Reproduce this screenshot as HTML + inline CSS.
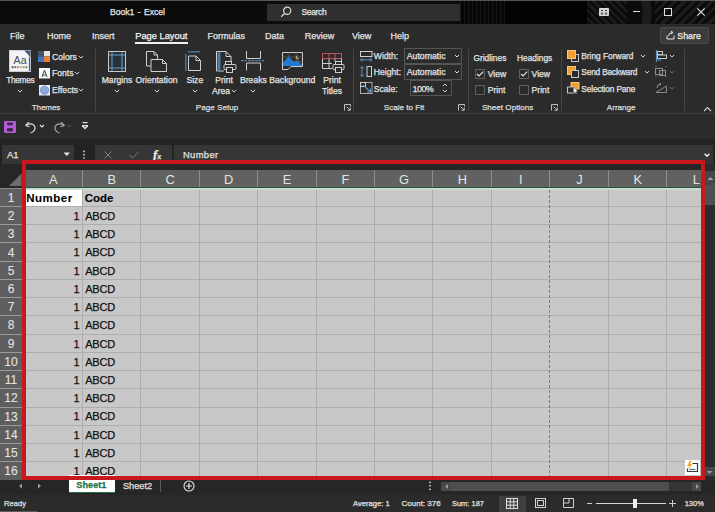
<!DOCTYPE html><html><head><meta charset="utf-8"><style>
*{margin:0;padding:0;box-sizing:border-box}
html,body{width:715px;height:512px;overflow:hidden;background:#2b2b2b;font-family:"Liberation Sans",sans-serif;color:#e6e6e6;position:relative}
.a{position:absolute}
.t{position:absolute;white-space:nowrap;line-height:1;-webkit-text-stroke:0.25px currentColor}
svg{overflow:visible}
</style></head><body>
<div class="a" style="left:0px;top:0px;width:715px;height:24px;background:#0b0b0b;"></div>
<div class="a" style="left:460px;top:1px;width:45px;height:23px;background:repeating-linear-gradient(90deg,#161616 0 1.5px,#070707 1.5px 4px);"></div>
<div class="a" style="left:505px;top:1px;width:82px;height:23px;background:#030303;"></div>
<div class="a" style="left:587px;top:1px;width:40px;height:23px;background:repeating-linear-gradient(45deg,#0b0b0b 0 3px,#1b1b1b 3px 5.5px);"></div>
<div class="a" style="left:627px;top:1px;width:88px;height:23px;background:#0b0b0b;"></div>
<div class="a" style="left:655px;top:1px;width:60px;height:23px;background:repeating-linear-gradient(-45deg,#0b0b0b 0 3.5px,#1c1c1c 3.5px 6.5px);"></div>
<svg class="a" style="left:587px;top:1px;overflow:hidden" width="128" height="23"><circle cx="8" cy="12" r="52" fill="none" stroke="#1c1c1c" stroke-width="9"/></svg>
<div class="a" style="left:0px;top:0px;width:715px;height:1px;background:#555555;"></div>
<div class="a" style="left:0px;top:24px;width:715px;height:89px;background:#2b2b2b;"></div>
<div class="a" style="left:0px;top:113px;width:715px;height:1px;background:#3c3c3c;"></div>
<div class="a" style="left:0px;top:114px;width:715px;height:25px;background:#2b2b2b;"></div>
<div class="a" style="left:0px;top:139px;width:715px;height:31px;background:#232323;"></div>
<div class="t" style="left:110.00px;top:8.00px;font-size:8.6px;color:#e6e6e6;word-spacing:1px">Book1 - Excel</div>
<div class="a" style="left:267px;top:4px;width:193px;height:17px;background:#2f2f2f;"></div>
<svg class="a" style="left:280px;top:6px" width="12" height="12" viewBox="0 0 12 12"><circle cx="7.2" cy="4.8" r="3.6" fill="none" stroke="#ddd" stroke-width="1.2"/><line x1="4.6" y1="7.4" x2="1.2" y2="10.8" stroke="#ddd" stroke-width="1.3"/></svg>
<div class="t" style="left:301.50px;top:8.00px;font-size:8.4px;color:#e6e6e6;letter-spacing:-0.3px">Search</div>
<svg class="a" style="left:598.5px;top:8px" width="10" height="8" viewBox="0 0 10 8"><rect x="0" y="0" width="10" height="8" rx="1" fill="#d8d8d8"/><path d="M2 2.5 H4 M6 2.5 H8" stroke="#333" stroke-width="1"/><path d="M3 4 V6.5 M7 4 V6.5 M2 5.5 L3 6.5 L4 5.5 M6 5.5 L7 6.5 L8 5.5" fill="none" stroke="#333" stroke-width="0.9"/></svg>
<div class="a" style="left:633px;top:11px;width:7px;height:1px;background:#ddd;"></div>
<div class="a" style="left:664px;top:8px;width:8px;height:8px;background:transparent;border:1px solid #ddd"></div>
<svg class="a" style="left:697px;top:8px" width="8" height="8" viewBox="0 0 8 8"><path d="M0.3 0.3L7.7 7.7M7.7 0.3L0.3 7.7" stroke="#ddd" stroke-width="1.1"/></svg>
<div class="t" style="left:10.00px;top:32.00px;font-size:9.0px;color:#e4e4e4;">File</div>
<div class="t" style="left:47.00px;top:32.00px;font-size:9.0px;color:#e4e4e4;">Home</div>
<div class="t" style="left:92.00px;top:32.00px;font-size:9.0px;color:#e4e4e4;">Insert</div>
<div class="t" style="left:207.40px;top:32.00px;font-size:9.0px;color:#e4e4e4;">Formulas</div>
<div class="t" style="left:265.00px;top:32.00px;font-size:9.0px;color:#e4e4e4;">Data</div>
<div class="t" style="left:304.70px;top:32.00px;font-size:9.0px;color:#e4e4e4;">Review</div>
<div class="t" style="left:352.00px;top:32.00px;font-size:9.0px;color:#e4e4e4;">View</div>
<div class="t" style="left:390.60px;top:32.00px;font-size:9.0px;color:#e4e4e4;">Help</div>
<div class="t" style="left:135.20px;top:32.00px;font-size:9.3px;color:#f4f4f4;">Page Layout</div>
<div class="a" style="left:135px;top:42px;width:53px;height:2px;background:#f0f0f0;"></div>
<div class="a" style="left:660px;top:27px;width:49px;height:17px;background:#3b3b3b;border:1px solid #4a4a4a;border-radius:2px"></div>
<svg class="a" style="left:666px;top:30px" width="9" height="10" viewBox="0 0 9 10"><path d="M1 5.5 V9 H8 V5.5" fill="none" stroke="#e8e8e8" stroke-width="1"/><path d="M2.5 6 Q3 2.5 6.5 2.5 M5 1 L7 2.5 L5 4" fill="none" stroke="#e8e8e8" stroke-width="1"/></svg>
<div class="t" style="left:677.30px;top:32.00px;font-size:8.8px;color:#f0f0f0;">Share</div>
<div class="a" style="left:94.5px;top:49px;width:1px;height:62px;background:#454545;"></div>
<div class="a" style="left:353.4px;top:49px;width:1px;height:62px;background:#454545;"></div>
<div class="a" style="left:467.5px;top:49px;width:1px;height:62px;background:#454545;"></div>
<div class="a" style="left:560.7px;top:49px;width:1px;height:62px;background:#454545;"></div>
<div class="a" style="left:683.5px;top:49px;width:1px;height:62px;background:#454545;"></div>
<div class="t" style="left:-14.00px;top:104.00px;font-size:8.1px;color:#dcdcdc;width:120.00px;text-align:center;letter-spacing:-0.15px">Themes</div>
<div class="t" style="left:157.00px;top:104.00px;font-size:8.1px;color:#dcdcdc;width:120.00px;text-align:center;">Page Setup</div>
<div class="t" style="left:344.00px;top:104.00px;font-size:8.1px;color:#dcdcdc;width:120.00px;text-align:center;">Scale to Fit</div>
<div class="t" style="left:447.60px;top:104.00px;font-size:8.1px;color:#dcdcdc;width:120.00px;text-align:center;">Sheet Options</div>
<div class="t" style="left:561.20px;top:104.00px;font-size:8.1px;color:#dcdcdc;width:120.00px;text-align:center;">Arrange</div>
<svg class="a" style="left:343.5px;top:104px" width="7" height="7" viewBox="0 0 7 7"><path d="M0.5 6.5 V0.5 H6.5 V2.5" fill="none" stroke="#bdbdbd" stroke-width="1"/><path d="M2.5 2.5 L6 6 M3.5 6.3 H6.3 V3.5" fill="none" stroke="#bdbdbd" stroke-width="1"/></svg>
<svg class="a" style="left:458px;top:104px" width="7" height="7" viewBox="0 0 7 7"><path d="M0.5 6.5 V0.5 H6.5 V2.5" fill="none" stroke="#bdbdbd" stroke-width="1"/><path d="M2.5 2.5 L6 6 M3.5 6.3 H6.3 V3.5" fill="none" stroke="#bdbdbd" stroke-width="1"/></svg>
<svg class="a" style="left:551px;top:104px" width="7" height="7" viewBox="0 0 7 7"><path d="M0.5 6.5 V0.5 H6.5 V2.5" fill="none" stroke="#bdbdbd" stroke-width="1"/><path d="M2.5 2.5 L6 6 M3.5 6.3 H6.3 V3.5" fill="none" stroke="#bdbdbd" stroke-width="1"/></svg>
<svg class="a" style="left:703px;top:106px" width="9" height="6" viewBox="0 0 9 6"><path d="M1 5 L4.5 1.5 L8 5" fill="none" stroke="#d0d0d0" stroke-width="1.1"/></svg>
<svg class="a" style="left:9px;top:50px" width="22" height="22" viewBox="0 0 22 22"><rect x="0.5" y="0.5" width="21" height="21" fill="#f3f3f7" stroke="#c9cde0"/><path d="M20.5 1 V21" stroke="#4f5a74" stroke-width="1.2"/><path d="M15 0.5 H21.5 V7 Z" fill="#4f5a74"/><path d="M15 0.5 L15.5 6 L21 7" fill="none" stroke="#fff" stroke-width="0.6"/><text x="4.6" y="14.2" font-family="Liberation Sans" font-size="10.6" fill="#4a4a4a">Aa</text><rect x="2.60" y="16.2" width="1.9" height="1.9" fill="#555"/><rect x="5.35" y="16.2" width="1.9" height="1.9" fill="#7a6a5f"/><rect x="8.10" y="16.2" width="1.9" height="1.9" fill="#b88a80"/><rect x="10.85" y="16.2" width="1.9" height="1.9" fill="#c0b070"/><rect x="13.60" y="16.2" width="1.9" height="1.9" fill="#88a868"/><rect x="16.35" y="16.2" width="1.9" height="1.9" fill="#5f9050"/></svg>
<div class="t" style="left:-39.70px;top:76.00px;font-size:8.3px;color:#e4e4e4;width:120.00px;text-align:center;letter-spacing:-0.3px">Themes</div>
<svg class="a" style="left:16px;top:87.8px" width="8" height="6" viewBox="0 0 8 6"><path d="M1.7999999999999998 1.9 L4 4.1 L6.2 1.9" fill="none" stroke="#d8d8d8" stroke-width="1"/></svg>
<svg class="a" style="left:38px;top:50.5px" width="12" height="11" viewBox="0 0 12 11"><rect x="0" y="0" width="6" height="5.5" fill="#44546a"/><rect x="0" y="5.5" width="6" height="5.5" fill="#4472c4"/><rect x="6" y="0" width="6" height="5.5" fill="#e7e6e6"/><rect x="6" y="5.5" width="6" height="5.5" fill="#ed7d31"/></svg>
<div class="t" style="left:52.00px;top:53.00px;font-size:8.6px;color:#e4e4e4;">Colors</div>
<svg class="a" style="left:76.5px;top:54px" width="8" height="6" viewBox="0 0 8 6"><path d="M1.7999999999999998 1.9 L4 4.1 L6.2 1.9" fill="none" stroke="#d8d8d8" stroke-width="1"/></svg>
<svg class="a" style="left:38.5px;top:67.8px" width="11" height="10.5" viewBox="0 0 11 10.5"><rect x="0" y="0" width="11" height="10.5" fill="#fafafa"/><path d="M3 9 L5.5 2 L8 9 M3.8 7 H7.2" fill="none" stroke="#444" stroke-width="1"/></svg>
<div class="t" style="left:52.00px;top:69.00px;font-size:8.6px;color:#e4e4e4;">Fonts</div>
<svg class="a" style="left:73px;top:70px" width="8" height="6" viewBox="0 0 8 6"><path d="M1.7999999999999998 1.9 L4 4.1 L6.2 1.9" fill="none" stroke="#d8d8d8" stroke-width="1"/></svg>
<svg class="a" style="left:38.5px;top:84.6px" width="11" height="10.5" viewBox="0 0 11 10.5"><rect x="0" y="0" width="11" height="10.5" fill="#e8ecf4"/><circle cx="5.5" cy="5.25" r="4.2" fill="#8eaadb" stroke="#5c7fbf" stroke-width="0.6"/></svg>
<div class="t" style="left:52.00px;top:86.00px;font-size:8.6px;color:#e4e4e4;">Effects</div>
<svg class="a" style="left:77px;top:87px" width="8" height="6" viewBox="0 0 8 6"><path d="M1.7999999999999998 1.9 L4 4.1 L6.2 1.9" fill="none" stroke="#d8d8d8" stroke-width="1"/></svg>
<svg class="a" style="left:108px;top:50.5px" width="18" height="21" viewBox="0 0 18 21"><rect x="0.5" y="0.5" width="17" height="20" fill="#26323c" stroke="#c8c8c8"/><path d="M4 1 V20 M14 1 V20 M1 4 H17 M1 17 H17" stroke="#6e9fc4" stroke-width="1"/></svg>
<div class="t" style="left:57.00px;top:76.00px;font-size:8.6px;color:#e4e4e4;width:120.00px;text-align:center;">Margins</div>
<svg class="a" style="left:113px;top:87.8px" width="8" height="6" viewBox="0 0 8 6"><path d="M1.7999999999999998 1.9 L4 4.1 L6.2 1.9" fill="none" stroke="#d8d8d8" stroke-width="1"/></svg>
<svg class="a" style="left:146px;top:51px" width="22" height="21" viewBox="0 0 22 21"><path d="M0.5 0.5 H8 L11.5 4 V15 H0.5 Z" fill="#2b2b2b" stroke="#cfcfcf"/><path d="M8 0.5 V4 H11.5" fill="none" stroke="#cfcfcf"/><path d="M5 8.5 H16.5 L20.5 12.5 V20.5 H5 Z" fill="#2b2b2b" stroke="#cfcfcf"/><path d="M16.5 8.5 V12.5 H20.5" fill="none" stroke="#cfcfcf"/></svg>
<div class="t" style="left:96.50px;top:76.00px;font-size:8.6px;color:#e4e4e4;width:120.00px;text-align:center;">Orientation</div>
<svg class="a" style="left:152.5px;top:87.8px" width="8" height="6" viewBox="0 0 8 6"><path d="M1.7999999999999998 1.9 L4 4.1 L6.2 1.9" fill="none" stroke="#d8d8d8" stroke-width="1"/></svg>
<svg class="a" style="left:185px;top:51px" width="17" height="21" viewBox="0 0 17 21"><path d="M0.8 3 V20" stroke="#4f7fa6" stroke-width="1.3"/><path d="M3 0.8 H15" stroke="#4f7fa6" stroke-width="1.3"/><path d="M3.5 5 H11 L15.5 9.5 V19.5 H3.5 Z" fill="none" stroke="#cfcfcf"/><path d="M11 5 V9.5 H15.5" fill="none" stroke="#cfcfcf"/></svg>
<div class="t" style="left:134.80px;top:76.00px;font-size:8.6px;color:#e4e4e4;width:120.00px;text-align:center;">Size</div>
<svg class="a" style="left:190.8px;top:87.8px" width="8" height="6" viewBox="0 0 8 6"><path d="M1.7999999999999998 1.9 L4 4.1 L6.2 1.9" fill="none" stroke="#d8d8d8" stroke-width="1"/></svg>
<svg class="a" style="left:216px;top:51px" width="21" height="22" viewBox="0 0 21 22"><path d="M0.5 0.5 H10 L15 5.5 V10" fill="none" stroke="#cfcfcf"/><path d="M10 0.5 V5.5 H15" fill="none" stroke="#cfcfcf"/><path d="M0.5 0.5 V20 H8" fill="none" stroke="#cfcfcf"/><rect x="1.5" y="1.5" width="3" height="18" fill="#4f7fa6"/><rect x="9.5" y="10.5" width="6" height="3" fill="#2b2b2b" stroke="#cfcfcf"/><rect x="8" y="13.5" width="12" height="5" rx="1" fill="#2b2b2b" stroke="#cfcfcf"/><rect x="10.5" y="16.5" width="6" height="5" fill="#2b2b2b" stroke="#cfcfcf"/></svg>
<div class="t" style="left:164.00px;top:76.00px;font-size:8.6px;color:#e4e4e4;width:120.00px;text-align:center;">Print</div>
<div class="t" style="left:212.00px;top:87.00px;font-size:8.6px;color:#e4e4e4;">Area</div>
<svg class="a" style="left:229.5px;top:87.8px" width="8" height="6" viewBox="0 0 8 6"><path d="M1.7999999999999998 1.9 L4 4.1 L6.2 1.9" fill="none" stroke="#d8d8d8" stroke-width="1"/></svg>
<svg class="a" style="left:241px;top:51px" width="23" height="20" viewBox="0 0 23 20"><path d="M5.5 0 V7.5 H19.5 V0" fill="none" stroke="#cfcfcf"/><path d="M5.5 19.5 V12 H19.5 V19.5" fill="none" stroke="#cfcfcf"/><path d="M0 9.6 H23" stroke="#4f86b5" stroke-width="1.2" stroke-dasharray="2.5 1"/></svg>
<div class="t" style="left:193.40px;top:76.00px;font-size:8.6px;color:#e4e4e4;width:120.00px;text-align:center;">Breaks</div>
<svg class="a" style="left:249.4px;top:87.8px" width="8" height="6" viewBox="0 0 8 6"><path d="M1.7999999999999998 1.9 L4 4.1 L6.2 1.9" fill="none" stroke="#d8d8d8" stroke-width="1"/></svg>
<svg class="a" style="left:282px;top:52px" width="21" height="18" viewBox="0 0 21 18"><path d="M0.5 0.5 H20.5 V14.5 H9 L6 17.5 H0.5 Z" fill="#2b2b2b" stroke="#cfcfcf"/><path d="M7 0.5 V14 M14 0.5 V14 M0.5 5 H20.5 M0.5 9.5 H20.5" stroke="#5a5a5a" stroke-width="0.9"/><path d="M1 14 V11 L6.5 4.5 L12.5 10.5 L15 8.5 L20 12.8 V14 Z" fill="#1f7ad6"/><path d="M16 3.5 A2 2 0 1 0 17.8 6.5 A1.6 1.6 0 0 1 16 3.5 Z" fill="#e8c878"/></svg>
<div class="t" style="left:232.30px;top:76.00px;font-size:8.6px;color:#e4e4e4;width:120.00px;text-align:center;">Background</div>
<svg class="a" style="left:321.5px;top:52.5px" width="23" height="20" viewBox="0 0 23 20"><path d="M0.5 5.5 V15.5 H10 M0.5 10.5 H10 M7 5.5 V15.5 M13 5.5 V8" fill="none" stroke="#cfcfcf" stroke-width="1"/><path d="M0.5 5.5 V0.5 H19.5 V5.5 M0.5 5.5 H19.5 M7 0.5 V5.5 M13 0.5 V5.5" fill="none" stroke="#c25555" stroke-width="1"/><path d="M19.5 5.5 V8" stroke="#cfcfcf"/><rect x="13.5" y="8.5" width="6" height="3" fill="#2b2b2b" stroke="#cfcfcf"/><rect x="11" y="11.5" width="11" height="5" rx="1" fill="#2b2b2b" stroke="#cfcfcf"/><rect x="13.5" y="14.5" width="6" height="5" fill="#2b2b2b" stroke="#cfcfcf"/></svg>
<div class="t" style="left:272.00px;top:76.00px;font-size:8.6px;color:#e4e4e4;width:120.00px;text-align:center;">Print</div>
<div class="t" style="left:272.00px;top:87.00px;font-size:8.6px;color:#e4e4e4;width:120.00px;text-align:center;">Titles</div>
<svg class="a" style="left:359.5px;top:50.5px" width="13" height="10" viewBox="0 0 13 10"><rect x="0.5" y="0.5" width="11.5" height="5" fill="none" stroke="#cfcfcf"/><path d="M0.5 8.8 H12 M2.5 7 L0.5 8.8 L2.5 10.6 M10 7 L12 8.8 L10 10.6" fill="none" stroke="#5a94c4" stroke-width="1"/></svg>
<div class="t" style="left:373.80px;top:52.00px;font-size:8.6px;color:#e4e4e4;">Width:</div>
<svg class="a" style="left:359.5px;top:66px" width="13" height="11" viewBox="0 0 13 11"><rect x="7" y="0.5" width="4.5" height="10" fill="none" stroke="#cfcfcf"/><path d="M2 0.5 V10.5 M0.2 2.5 L2 0.5 L3.8 2.5 M0.2 8.5 L2 10.5 L3.8 8.5" fill="none" stroke="#5a94c4" stroke-width="1"/></svg>
<div class="t" style="left:373.80px;top:68.00px;font-size:8.6px;color:#e4e4e4;">Height:</div>
<svg class="a" style="left:359.5px;top:82px" width="13" height="12" viewBox="0 0 13 12"><rect x="0.5" y="0.5" width="11.5" height="11" fill="none" stroke="#b7a8a0"/><rect x="0.5" y="0.5" width="5" height="4" fill="none" stroke="#cfcfcf"/><path d="M3 3 L10.5 10 M7 10 H10.5 V6.5" fill="none" stroke="#5a94c4" stroke-width="1.1"/></svg>
<div class="t" style="left:373.80px;top:85.00px;font-size:8.6px;color:#e4e4e4;">Scale:</div>
<div class="a" style="left:404px;top:47.5px;width:57.6px;height:16px;background:#2b2b2b;border:1px solid #555"></div>
<div class="t" style="left:406.70px;top:52.00px;font-size:8.75px;color:#e6e6e6;">Automatic</div>
<svg class="a" style="left:452.5px;top:52.8px" width="8" height="6" viewBox="0 0 8 6"><path d="M2 2.0 L4 4.0 L6 2.0" fill="none" stroke="#e0e0e0" stroke-width="1"/></svg>
<div class="a" style="left:404px;top:63.5px;width:57.6px;height:16px;background:#2b2b2b;border:1px solid #555"></div>
<div class="t" style="left:406.70px;top:68.00px;font-size:8.75px;color:#e6e6e6;">Automatic</div>
<svg class="a" style="left:452.5px;top:68.8px" width="8" height="6" viewBox="0 0 8 6"><path d="M2 2.0 L4 4.0 L6 2.0" fill="none" stroke="#e0e0e0" stroke-width="1"/></svg>
<div class="a" style="left:410px;top:80.3px;width:41.5px;height:16px;background:#2b2b2b;border:1px solid #555"></div>
<div class="t" style="left:412.60px;top:85.00px;font-size:9.0px;color:#e6e6e6;letter-spacing:-0.6px">100%</div>
<svg class="a" style="left:442px;top:82px" width="6" height="12" viewBox="0 0 6 12"><path d="M1 4 L3 2 L5 4 M1 8 L3 10 L5 8" fill="none" stroke="#d0d0d0" stroke-width="1"/></svg>
<div class="t" style="left:473.40px;top:54.00px;font-size:8.35px;color:#e4e4e4;">Gridlines</div>
<div class="t" style="left:517.00px;top:54.00px;font-size:8.35px;color:#e4e4e4;">Headings</div>
<svg class="a" style="left:475.2px;top:68.5px" width="10" height="10" viewBox="0 0 10 10"><rect x="0.5" y="0.5" width="9" height="9" fill="none" stroke="#5f5f5f"/><path d="M2 5 L4 7 L8.2 2.6" fill="none" stroke="#e8e8e8" stroke-width="1.1"/></svg>
<div class="t" style="left:487.70px;top:70.00px;font-size:8.6px;color:#e4e4e4;">View</div>
<svg class="a" style="left:475.2px;top:84.5px" width="10" height="10" viewBox="0 0 10 10"><rect x="0.5" y="0.5" width="9" height="9" fill="none" stroke="#5f5f5f"/></svg>
<div class="t" style="left:487.70px;top:86.00px;font-size:8.6px;color:#e4e4e4;">Print</div>
<svg class="a" style="left:519px;top:68.5px" width="10" height="10" viewBox="0 0 10 10"><rect x="0.5" y="0.5" width="9" height="9" fill="none" stroke="#5f5f5f"/><path d="M2 5 L4 7 L8.2 2.6" fill="none" stroke="#e8e8e8" stroke-width="1.1"/></svg>
<div class="t" style="left:531.60px;top:70.00px;font-size:8.6px;color:#e4e4e4;">View</div>
<svg class="a" style="left:519px;top:84.5px" width="10" height="10" viewBox="0 0 10 10"><rect x="0.5" y="0.5" width="9" height="9" fill="none" stroke="#5f5f5f"/></svg>
<div class="t" style="left:531.60px;top:86.00px;font-size:8.6px;color:#e4e4e4;">Print</div>
<svg class="a" style="left:567px;top:49.5px" width="13" height="12" viewBox="0 0 13 12"><rect x="4.5" y="4.5" width="7" height="7" fill="none" stroke="#c8c8c8"/><rect x="0.5" y="0.5" width="8" height="8" fill="#f0a030" stroke="#f7c57a"/></svg>
<div class="t" style="left:581.30px;top:52.00px;font-size:8.3px;color:#e4e4e4;">Bring Forward</div>
<svg class="a" style="left:638.5px;top:52.5px" width="8" height="6" viewBox="0 0 8 6"><path d="M1.7999999999999998 1.9 L4 4.1 L6.2 1.9" fill="none" stroke="#d8d8d8" stroke-width="1"/></svg>
<svg class="a" style="left:567px;top:65.5px" width="13" height="12" viewBox="0 0 13 12"><rect x="0.5" y="0.5" width="8" height="8" fill="#f0a030" stroke="#f7c57a"/><rect x="4.5" y="4.5" width="7" height="7" fill="#2b2b2b" stroke="#c8c8c8"/></svg>
<div class="t" style="left:581.30px;top:68.00px;font-size:8.3px;color:#e4e4e4;letter-spacing:-0.16px">Send Backward</div>
<svg class="a" style="left:642.6px;top:68.6px" width="8" height="6" viewBox="0 0 8 6"><path d="M1.7999999999999998 1.9 L4 4.1 L6.2 1.9" fill="none" stroke="#d8d8d8" stroke-width="1"/></svg>
<svg class="a" style="left:567px;top:82px" width="13" height="12" viewBox="0 0 13 12"><rect x="4" y="0.5" width="8" height="6.5" fill="#f0a030" stroke="#f7c57a"/><rect x="0.5" y="5" width="6.5" height="6" fill="#2b2b2b" stroke="#c8c8c8"/><path d="M6.5 5 L11 9.5 L9 9.8 L10 12 L8.8 12 L7.9 10 L6.5 11.5 Z" fill="#eee" stroke="#333" stroke-width="0.4"/></svg>
<div class="t" style="left:581.30px;top:85.00px;font-size:8.3px;color:#e4e4e4;letter-spacing:-0.13px">Selection Pane</div>
<svg class="a" style="left:655px;top:49.5px" width="12" height="12" viewBox="0 0 12 12"><path d="M1.5 0 V12" stroke="#5a94c4" stroke-width="1.2"/><rect x="2.5" y="1.5" width="5" height="3" fill="none" stroke="#c8c8c8"/><rect x="2.5" y="5" width="9" height="3.5" fill="none" stroke="#c8c8c8"/><path d="M2.5 10 H6" stroke="#5a94c4"/></svg>
<svg class="a" style="left:668.2px;top:52.5px" width="8" height="6" viewBox="0 0 8 6"><path d="M1.7999999999999998 1.9 L4 4.1 L6.2 1.9" fill="none" stroke="#d8d8d8" stroke-width="1"/></svg>
<svg class="a" style="left:655px;top:66px" width="12" height="11" viewBox="0 0 12 11"><rect x="0.5" y="2.5" width="7" height="6" fill="none" stroke="#8a8a8a"/><rect x="4.5" y="4.5" width="6" height="5" fill="none" stroke="#8a8a8a"/><path d="M0.5 0.5 H1.5 M10.5 0.5 H11.5 M0.5 10.5 H1.5 M10.5 10.5 H11.5" stroke="#8a8a8a"/></svg>
<svg class="a" style="left:668.2px;top:68.6px" width="8" height="6" viewBox="0 0 8 6"><path d="M1.7999999999999998 1.9 L4 4.1 L6.2 1.9" fill="none" stroke="#6a6a6a" stroke-width="1"/></svg>
<svg class="a" style="left:655px;top:82.5px" width="12" height="10" viewBox="0 0 12 10"><path d="M1 9.5 H11.5 V3 Z" fill="none" stroke="#8a8a8a"/><path d="M2 5 Q2 1 6 1 M4.5 0 L6 1 L4.5 2.5" fill="none" stroke="#8a8a8a"/></svg>
<svg class="a" style="left:668.2px;top:85px" width="8" height="6" viewBox="0 0 8 6"><path d="M1.7999999999999998 1.9 L4 4.1 L6.2 1.9" fill="none" stroke="#6a6a6a" stroke-width="1"/></svg>
<svg class="a" style="left:4px;top:121px" width="12" height="12" viewBox="0 0 12 12"><path d="M0 1.2 Q0 0 1.2 0 H10.8 Q12 0 12 1.2 V10.8 Q12 12 10.8 12 H1.2 Q0 12 0 10.8 Z" fill="#b25dd6"/><rect x="3.2" y="1.6" width="5.6" height="2.6" fill="#3a2440"/><rect x="3.2" y="7.2" width="5.6" height="3.2" fill="#3a2440"/></svg>
<svg class="a" style="left:24px;top:119px" width="14" height="15" viewBox="0 0 14 15"><path d="M1.5 6.5 L5 3.2 M1.5 6.5 L5.6 7.8" fill="none" stroke="#dcdcdc" stroke-width="1.2"/><path d="M1.8 6.4 Q6 4 9 5.5 Q12 7.5 10.5 11 Q9.5 13.2 6.5 14" fill="none" stroke="#dcdcdc" stroke-width="1.2"/></svg>
<svg class="a" style="left:38px;top:123.3px" width="8" height="6" viewBox="0 0 8 6"><path d="M2 2.0 L4 4.0 L6 2.0" fill="none" stroke="#dcdcdc" stroke-width="1.1"/></svg>
<svg class="a" style="left:51.5px;top:119px" width="14" height="15" viewBox="0 0 14 15"><path d="M12.5 6.5 L9 3.2 M12.5 6.5 L8.4 7.8" fill="none" stroke="#a8a8a8" stroke-width="1.2"/><path d="M12.2 6.4 Q8 4 5 5.5 Q2 7.5 3.5 11 Q4.5 13.2 7.5 14" fill="none" stroke="#a8a8a8" stroke-width="1.2"/></svg>
<svg class="a" style="left:65px;top:123px" width="8" height="6" viewBox="0 0 8 6"><path d="M2.4 2.2 L4 3.8 L5.6 2.2" fill="none" stroke="#6a6a6a" stroke-width="1"/></svg>
<svg class="a" style="left:81.5px;top:122px" width="6" height="8" viewBox="0 0 6 8"><rect x="0.5" y="0" width="5" height="1.2" fill="#e0e0e0"/><path d="M0 3 H6 V4.5 L3 7.5 L0 4.5 Z" fill="#e0e0e0"/><path d="M1.8 4 L3 5.2 L4.2 4" fill="none" stroke="#2b2b2b" stroke-width="0.8"/></svg>
<div class="a" style="left:2px;top:145px;width:72px;height:19px;background:#363636;"></div>
<div class="t" style="left:7.00px;top:150.00px;font-size:9.5px;color:#e4e4e4;">A1</div>
<svg class="a" style="left:62.5px;top:151.5px" width="8" height="5" viewBox="0 0 8 5"><path d="M0.5 0.5 H7 L3.75 4 Z" fill="#e0e0e0"/></svg>
<svg class="a" style="left:83px;top:150px" width="2" height="10" viewBox="0 0 2 10"><circle cx="1" cy="1.4" r="0.85" fill="#e0e0e0"/><circle cx="1" cy="4.7" r="0.85" fill="#e0e0e0"/><circle cx="1" cy="8" r="0.85" fill="#e0e0e0"/></svg>
<div class="a" style="left:94.5px;top:145px;width:77px;height:19px;background:#363636;"></div>
<svg class="a" style="left:104px;top:151px" width="8" height="8" viewBox="0 0 8 8"><path d="M0.5 0.5 L7.5 7.5 M7.5 0.5 L0.5 7.5" stroke="#7c7c7c" stroke-width="1"/></svg>
<svg class="a" style="left:129px;top:150.5px" width="10" height="8" viewBox="0 0 10 8"><path d="M0.5 4 L3.5 7 L9.5 0.8" fill="none" stroke="#7c7c7c" stroke-width="1"/></svg>
<div class="t" style="left:153.00px;top:148.00px;font-size:13px;color:#ececec;font-weight:bold;font-family:'Liberation Serif',serif"><i>f</i><span style="font-size:8px"><i>x</i></span></div>
<div class="a" style="left:174px;top:145px;width:539px;height:19px;background:#363636;"></div>
<div class="t" style="left:183.00px;top:151.00px;font-size:9.3px;color:#e4e4e4;letter-spacing:0.4px">Number</div>
<svg class="a" style="left:703px;top:151.5px" width="8" height="6" viewBox="0 0 8 6"><path d="M1.6 1.8 L4 4.2 L6.4 1.8" fill="none" stroke="#f0f0f0" stroke-width="1.4"/></svg>
<div class="a" style="left:0px;top:164px;width:715px;height:316px;background:#262626;"></div>
<svg class="a" style="left:0px;top:170px" width="22" height="18" viewBox="0 0 22 18"><path d="M21.5 3.5 L21.5 16 L9 16 Z" fill="#6e6e6e"/></svg>
<div class="a" style="left:22px;top:170px;width:683px;height:17px;background:#5f6260;"></div>
<div class="t" style="left:-6.73px;top:174.00px;font-size:12.8px;color:#e4e4e4;width:120.00px;text-align:center;-webkit-text-stroke:0">A</div>
<div class="a" style="left:81.70px;top:170px;width:1px;height:17px;background:#8e9090;"></div>
<div class="t" style="left:51.73px;top:174.00px;font-size:12.8px;color:#e4e4e4;width:120.00px;text-align:center;-webkit-text-stroke:0">B</div>
<div class="a" style="left:140.15px;top:170px;width:1px;height:17px;background:#8e9090;"></div>
<div class="t" style="left:110.18px;top:174.00px;font-size:12.8px;color:#e4e4e4;width:120.00px;text-align:center;-webkit-text-stroke:0">C</div>
<div class="a" style="left:198.60px;top:170px;width:1px;height:17px;background:#8e9090;"></div>
<div class="t" style="left:168.63px;top:174.00px;font-size:12.8px;color:#e4e4e4;width:120.00px;text-align:center;-webkit-text-stroke:0">D</div>
<div class="a" style="left:257.05px;top:170px;width:1px;height:17px;background:#8e9090;"></div>
<div class="t" style="left:227.08px;top:174.00px;font-size:12.8px;color:#e4e4e4;width:120.00px;text-align:center;-webkit-text-stroke:0">E</div>
<div class="a" style="left:315.50px;top:170px;width:1px;height:17px;background:#8e9090;"></div>
<div class="t" style="left:285.53px;top:174.00px;font-size:12.8px;color:#e4e4e4;width:120.00px;text-align:center;-webkit-text-stroke:0">F</div>
<div class="a" style="left:373.95px;top:170px;width:1px;height:17px;background:#8e9090;"></div>
<div class="t" style="left:343.98px;top:174.00px;font-size:12.8px;color:#e4e4e4;width:120.00px;text-align:center;-webkit-text-stroke:0">G</div>
<div class="a" style="left:432.40px;top:170px;width:1px;height:17px;background:#8e9090;"></div>
<div class="t" style="left:402.43px;top:174.00px;font-size:12.8px;color:#e4e4e4;width:120.00px;text-align:center;-webkit-text-stroke:0">H</div>
<div class="a" style="left:490.85px;top:170px;width:1px;height:17px;background:#8e9090;"></div>
<div class="t" style="left:460.88px;top:174.00px;font-size:12.8px;color:#e4e4e4;width:120.00px;text-align:center;-webkit-text-stroke:0">I</div>
<div class="a" style="left:549.30px;top:170px;width:1px;height:17px;background:#8e9090;"></div>
<div class="t" style="left:519.33px;top:174.00px;font-size:12.8px;color:#e4e4e4;width:120.00px;text-align:center;-webkit-text-stroke:0">J</div>
<div class="a" style="left:607.75px;top:170px;width:1px;height:17px;background:#8e9090;"></div>
<div class="t" style="left:577.77px;top:174.00px;font-size:12.8px;color:#e4e4e4;width:120.00px;text-align:center;-webkit-text-stroke:0">K</div>
<div class="a" style="left:666.20px;top:170px;width:1px;height:17px;background:#8e9090;"></div>
<div class="t" style="left:636.23px;top:174.00px;font-size:12.8px;color:#e4e4e4;width:120.00px;text-align:center;-webkit-text-stroke:0">L</div>
<div class="a" style="left:22px;top:186.6px;width:683px;height:1.4px;background:#30503f;"></div>
<div class="a" style="left:22px;top:188px;width:683px;height:2px;background:#c4e0cf;"></div>
<div class="a" style="left:0px;top:188px;width:22px;height:292px;background:#5e5e5e;"></div>
<div class="a" style="left:0px;top:188px;width:22px;height:1px;background:#8a8a8a;"></div>
<div class="a" style="left:22px;top:190px;width:683px;height:290px;background:#c8c8c8;"></div>
<div class="t" style="left:-49.00px;top:192.00px;font-size:12px;color:#e4e4e4;width:120.00px;text-align:center;-webkit-text-stroke:0.1px #e4e4e4">1</div>
<div class="a" style="left:0px;top:205.94px;width:22px;height:1px;background:#9a9a9a;"></div>
<div class="a" style="left:22px;top:205.94px;width:683px;height:1px;background:#aeaeae;"></div>
<div class="t" style="left:-49.00px;top:210.00px;font-size:12px;color:#e4e4e4;width:120.00px;text-align:center;-webkit-text-stroke:0.1px #e4e4e4">2</div>
<div class="a" style="left:0px;top:224.18px;width:22px;height:1px;background:#9a9a9a;"></div>
<div class="a" style="left:22px;top:224.18px;width:683px;height:1px;background:#aeaeae;"></div>
<div class="t" style="left:-49.00px;top:228.00px;font-size:12px;color:#e4e4e4;width:120.00px;text-align:center;-webkit-text-stroke:0.1px #e4e4e4">3</div>
<div class="a" style="left:0px;top:242.42px;width:22px;height:1px;background:#9a9a9a;"></div>
<div class="a" style="left:22px;top:242.42px;width:683px;height:1px;background:#aeaeae;"></div>
<div class="t" style="left:-49.00px;top:247.00px;font-size:12px;color:#e4e4e4;width:120.00px;text-align:center;-webkit-text-stroke:0.1px #e4e4e4">4</div>
<div class="a" style="left:0px;top:260.66px;width:22px;height:1px;background:#9a9a9a;"></div>
<div class="a" style="left:22px;top:260.66px;width:683px;height:1px;background:#aeaeae;"></div>
<div class="t" style="left:-49.00px;top:265.00px;font-size:12px;color:#e4e4e4;width:120.00px;text-align:center;-webkit-text-stroke:0.1px #e4e4e4">5</div>
<div class="a" style="left:0px;top:278.90px;width:22px;height:1px;background:#9a9a9a;"></div>
<div class="a" style="left:22px;top:278.90px;width:683px;height:1px;background:#aeaeae;"></div>
<div class="t" style="left:-49.00px;top:283.00px;font-size:12px;color:#e4e4e4;width:120.00px;text-align:center;-webkit-text-stroke:0.1px #e4e4e4">6</div>
<div class="a" style="left:0px;top:297.14px;width:22px;height:1px;background:#9a9a9a;"></div>
<div class="a" style="left:22px;top:297.14px;width:683px;height:1px;background:#aeaeae;"></div>
<div class="t" style="left:-49.00px;top:301.00px;font-size:12px;color:#e4e4e4;width:120.00px;text-align:center;-webkit-text-stroke:0.1px #e4e4e4">7</div>
<div class="a" style="left:0px;top:315.38px;width:22px;height:1px;background:#9a9a9a;"></div>
<div class="a" style="left:22px;top:315.38px;width:683px;height:1px;background:#aeaeae;"></div>
<div class="t" style="left:-49.00px;top:319.00px;font-size:12px;color:#e4e4e4;width:120.00px;text-align:center;-webkit-text-stroke:0.1px #e4e4e4">8</div>
<div class="a" style="left:0px;top:333.62px;width:22px;height:1px;background:#9a9a9a;"></div>
<div class="a" style="left:22px;top:333.62px;width:683px;height:1px;background:#aeaeae;"></div>
<div class="t" style="left:-49.00px;top:338.00px;font-size:12px;color:#e4e4e4;width:120.00px;text-align:center;-webkit-text-stroke:0.1px #e4e4e4">9</div>
<div class="a" style="left:0px;top:351.86px;width:22px;height:1px;background:#9a9a9a;"></div>
<div class="a" style="left:22px;top:351.86px;width:683px;height:1px;background:#aeaeae;"></div>
<div class="t" style="left:-49.00px;top:356.00px;font-size:12px;color:#e4e4e4;width:120.00px;text-align:center;-webkit-text-stroke:0.1px #e4e4e4">10</div>
<div class="a" style="left:0px;top:370.10px;width:22px;height:1px;background:#9a9a9a;"></div>
<div class="a" style="left:22px;top:370.10px;width:683px;height:1px;background:#aeaeae;"></div>
<div class="t" style="left:-49.00px;top:374.00px;font-size:12px;color:#e4e4e4;width:120.00px;text-align:center;-webkit-text-stroke:0.1px #e4e4e4">11</div>
<div class="a" style="left:0px;top:388.34px;width:22px;height:1px;background:#9a9a9a;"></div>
<div class="a" style="left:22px;top:388.34px;width:683px;height:1px;background:#aeaeae;"></div>
<div class="t" style="left:-49.00px;top:392.00px;font-size:12px;color:#e4e4e4;width:120.00px;text-align:center;-webkit-text-stroke:0.1px #e4e4e4">12</div>
<div class="a" style="left:0px;top:406.58px;width:22px;height:1px;background:#9a9a9a;"></div>
<div class="a" style="left:22px;top:406.58px;width:683px;height:1px;background:#aeaeae;"></div>
<div class="t" style="left:-49.00px;top:411.00px;font-size:12px;color:#e4e4e4;width:120.00px;text-align:center;-webkit-text-stroke:0.1px #e4e4e4">13</div>
<div class="a" style="left:0px;top:424.82px;width:22px;height:1px;background:#9a9a9a;"></div>
<div class="a" style="left:22px;top:424.82px;width:683px;height:1px;background:#aeaeae;"></div>
<div class="t" style="left:-49.00px;top:429.00px;font-size:12px;color:#e4e4e4;width:120.00px;text-align:center;-webkit-text-stroke:0.1px #e4e4e4">14</div>
<div class="a" style="left:0px;top:443.06px;width:22px;height:1px;background:#9a9a9a;"></div>
<div class="a" style="left:22px;top:443.06px;width:683px;height:1px;background:#aeaeae;"></div>
<div class="t" style="left:-49.00px;top:447.00px;font-size:12px;color:#e4e4e4;width:120.00px;text-align:center;-webkit-text-stroke:0.1px #e4e4e4">15</div>
<div class="a" style="left:0px;top:461.30px;width:22px;height:1px;background:#9a9a9a;"></div>
<div class="a" style="left:22px;top:461.30px;width:683px;height:1px;background:#aeaeae;"></div>
<div class="t" style="left:-49.00px;top:465.00px;font-size:12px;color:#e4e4e4;width:120.00px;text-align:center;-webkit-text-stroke:0.1px #e4e4e4">16</div>
<div class="a" style="left:81.70px;top:190px;width:1px;height:290px;background:#aeaeae;"></div>
<div class="a" style="left:140.15px;top:190px;width:1px;height:290px;background:#aeaeae;"></div>
<div class="a" style="left:198.60px;top:190px;width:1px;height:290px;background:#aeaeae;"></div>
<div class="a" style="left:257.05px;top:190px;width:1px;height:290px;background:#aeaeae;"></div>
<div class="a" style="left:315.50px;top:190px;width:1px;height:290px;background:#aeaeae;"></div>
<div class="a" style="left:373.95px;top:190px;width:1px;height:290px;background:#aeaeae;"></div>
<div class="a" style="left:432.40px;top:190px;width:1px;height:290px;background:#aeaeae;"></div>
<div class="a" style="left:490.85px;top:190px;width:1px;height:290px;background:#aeaeae;"></div>
<div class="a" style="left:549.30px;top:190px;width:1px;height:290px;background:repeating-linear-gradient(#7a7a7a 0 3px,transparent 3px 5px);"></div>
<div class="a" style="left:607.75px;top:190px;width:1px;height:290px;background:#aeaeae;"></div>
<div class="a" style="left:666.20px;top:190px;width:1px;height:290px;background:#aeaeae;"></div>
<div class="a" style="left:23.75px;top:190px;width:57.95px;height:15.94px;background:#ffffff;"></div>
<div class="t" style="left:26.25px;top:193.00px;font-size:11.5px;color:#000;font-weight:bold;letter-spacing:0.5px;-webkit-text-stroke:0.1px #000">Number</div>
<div class="t" style="left:84.70px;top:193.00px;font-size:11.5px;color:#000;font-weight:bold;-webkit-text-stroke:0.1px #000">Code</div>
<div class="t" style="left:23.75px;top:211.00px;font-size:11px;color:#111;width:55.95px;text-align:right;-webkit-text-stroke:0.25px #111">1</div>
<div class="t" style="left:85.20px;top:211.00px;font-size:11px;color:#111;letter-spacing:-0.2px;-webkit-text-stroke:0.25px #111">ABCD</div>
<div class="t" style="left:23.75px;top:229.00px;font-size:11px;color:#111;width:55.95px;text-align:right;-webkit-text-stroke:0.25px #111">1</div>
<div class="t" style="left:85.20px;top:229.00px;font-size:11px;color:#111;letter-spacing:-0.2px;-webkit-text-stroke:0.25px #111">ABCD</div>
<div class="t" style="left:23.75px;top:247.00px;font-size:11px;color:#111;width:55.95px;text-align:right;-webkit-text-stroke:0.25px #111">1</div>
<div class="t" style="left:85.20px;top:247.00px;font-size:11px;color:#111;letter-spacing:-0.2px;-webkit-text-stroke:0.25px #111">ABCD</div>
<div class="t" style="left:23.75px;top:266.00px;font-size:11px;color:#111;width:55.95px;text-align:right;-webkit-text-stroke:0.25px #111">1</div>
<div class="t" style="left:85.20px;top:266.00px;font-size:11px;color:#111;letter-spacing:-0.2px;-webkit-text-stroke:0.25px #111">ABCD</div>
<div class="t" style="left:23.75px;top:284.00px;font-size:11px;color:#111;width:55.95px;text-align:right;-webkit-text-stroke:0.25px #111">1</div>
<div class="t" style="left:85.20px;top:284.00px;font-size:11px;color:#111;letter-spacing:-0.2px;-webkit-text-stroke:0.25px #111">ABCD</div>
<div class="t" style="left:23.75px;top:302.00px;font-size:11px;color:#111;width:55.95px;text-align:right;-webkit-text-stroke:0.25px #111">1</div>
<div class="t" style="left:85.20px;top:302.00px;font-size:11px;color:#111;letter-spacing:-0.2px;-webkit-text-stroke:0.25px #111">ABCD</div>
<div class="t" style="left:23.75px;top:320.00px;font-size:11px;color:#111;width:55.95px;text-align:right;-webkit-text-stroke:0.25px #111">1</div>
<div class="t" style="left:85.20px;top:320.00px;font-size:11px;color:#111;letter-spacing:-0.2px;-webkit-text-stroke:0.25px #111">ABCD</div>
<div class="t" style="left:23.75px;top:339.00px;font-size:11px;color:#111;width:55.95px;text-align:right;-webkit-text-stroke:0.25px #111">1</div>
<div class="t" style="left:85.20px;top:339.00px;font-size:11px;color:#111;letter-spacing:-0.2px;-webkit-text-stroke:0.25px #111">ABCD</div>
<div class="t" style="left:23.75px;top:357.00px;font-size:11px;color:#111;width:55.95px;text-align:right;-webkit-text-stroke:0.25px #111">1</div>
<div class="t" style="left:85.20px;top:357.00px;font-size:11px;color:#111;letter-spacing:-0.2px;-webkit-text-stroke:0.25px #111">ABCD</div>
<div class="t" style="left:23.75px;top:375.00px;font-size:11px;color:#111;width:55.95px;text-align:right;-webkit-text-stroke:0.25px #111">1</div>
<div class="t" style="left:85.20px;top:375.00px;font-size:11px;color:#111;letter-spacing:-0.2px;-webkit-text-stroke:0.25px #111">ABCD</div>
<div class="t" style="left:23.75px;top:393.00px;font-size:11px;color:#111;width:55.95px;text-align:right;-webkit-text-stroke:0.25px #111">1</div>
<div class="t" style="left:85.20px;top:393.00px;font-size:11px;color:#111;letter-spacing:-0.2px;-webkit-text-stroke:0.25px #111">ABCD</div>
<div class="t" style="left:23.75px;top:411.00px;font-size:11px;color:#111;width:55.95px;text-align:right;-webkit-text-stroke:0.25px #111">1</div>
<div class="t" style="left:85.20px;top:411.00px;font-size:11px;color:#111;letter-spacing:-0.2px;-webkit-text-stroke:0.25px #111">ABCD</div>
<div class="t" style="left:23.75px;top:430.00px;font-size:11px;color:#111;width:55.95px;text-align:right;-webkit-text-stroke:0.25px #111">1</div>
<div class="t" style="left:85.20px;top:430.00px;font-size:11px;color:#111;letter-spacing:-0.2px;-webkit-text-stroke:0.25px #111">ABCD</div>
<div class="t" style="left:23.75px;top:448.00px;font-size:11px;color:#111;width:55.95px;text-align:right;-webkit-text-stroke:0.25px #111">1</div>
<div class="t" style="left:85.20px;top:448.00px;font-size:11px;color:#111;letter-spacing:-0.2px;-webkit-text-stroke:0.25px #111">ABCD</div>
<div class="t" style="left:23.75px;top:466.00px;font-size:11px;color:#111;width:55.95px;text-align:right;-webkit-text-stroke:0.25px #111">1</div>
<div class="t" style="left:85.20px;top:466.00px;font-size:11px;color:#111;letter-spacing:-0.2px;-webkit-text-stroke:0.25px #111">ABCD</div>
<div class="a" style="left:705px;top:164px;width:10px;height:316px;background:#2c2c2c;"></div>
<div class="a" style="left:705px;top:171px;width:9.5px;height:13.5px;background:#474747;"></div>
<svg class="a" style="left:706.5px;top:175.5px" width="7" height="5" viewBox="0 0 7 5"><path d="M0.5 4 L3.5 1 L6.5 4 Z" fill="#a0a0a0"/></svg>
<div class="a" style="left:705px;top:184.5px;width:9.5px;height:20.5px;background:#505050;"></div>
<div class="a" style="left:705px;top:466.5px;width:9.5px;height:9.5px;background:#474747;"></div>
<svg class="a" style="left:706px;top:469.5px" width="7" height="5" viewBox="0 0 7 5"><path d="M0.5 1 L3.5 4 L6.5 1 Z" fill="#9a9a9a"/></svg>
<div class="a" style="left:685px;top:460px;width:15px;height:15px;background:#ffffff;"></div>
<svg class="a" style="left:685px;top:460px" width="15" height="15" viewBox="0 0 15 15"><path d="M7.5 3.5 H12.5 V11.5 H2.5 V8.5" fill="none" stroke="#3a3a3a" stroke-width="1.2"/><path d="M4.5 9.5 H10.5" stroke="#4a8a6a" stroke-width="1.3"/><path d="M5 0.5 L2 6 H4.3 L3.2 9.5 L7.5 4 H5.2 L6.5 0.5 Z" fill="#f0a830"/></svg>
<div class="a" style="left:0px;top:480px;width:715px;height:15px;background:#262626;"></div>
<svg class="a" style="left:18px;top:483px" width="5" height="6" viewBox="0 0 5 6"><path d="M4 0.5 L1 3 L4 5.5 Z" fill="#9a9a9a"/></svg>
<svg class="a" style="left:37px;top:483px" width="5" height="6" viewBox="0 0 5 6"><path d="M1 0.5 L4 3 L1 5.5 Z" fill="#9a9a9a"/></svg>
<div class="a" style="left:69px;top:475px;width:46px;height:17.5px;background:#ffffff;"></div>
<div class="a" style="left:69px;top:491.5px;width:46px;height:1.5px;background:#217346;"></div>
<div class="t" style="left:31.40px;top:481.00px;font-size:9.2px;color:#217346;font-weight:bold;width:120.00px;text-align:center;">Sheet1</div>
<div class="t" style="left:77.50px;top:482.00px;font-size:9.2px;color:#e0e0e0;width:120.00px;text-align:center;">Sheet2</div>
<div class="a" style="left:160px;top:480px;width:1px;height:12px;background:#5a5a5a;"></div>
<svg class="a" style="left:183px;top:480px" width="12" height="12" viewBox="0 0 12 12"><circle cx="6" cy="6" r="5" fill="none" stroke="#e8e8e8" stroke-width="1.1"/><path d="M6 3 V9 M3 6 H9" stroke="#e8e8e8" stroke-width="1.2"/></svg>
<svg class="a" style="left:428.5px;top:481px" width="2" height="10" viewBox="0 0 2 10"><circle cx="1" cy="1.3" r="0.9" fill="#ddd"/><circle cx="1" cy="4.8" r="0.9" fill="#ddd"/><circle cx="1" cy="8.3" r="0.9" fill="#ddd"/></svg>
<div class="a" style="left:441px;top:481.5px;width:10px;height:9px;background:#484848;"></div>
<svg class="a" style="left:444px;top:484px" width="5" height="5" viewBox="0 0 5 5"><path d="M4 0 L1 2.5 L4 5 Z" fill="#9a9a9a"/></svg>
<div class="a" style="left:451px;top:481.5px;width:218px;height:9px;background:#4e4e4e;"></div>
<div class="a" style="left:669px;top:481.5px;width:23px;height:9px;background:#353535;"></div>
<div class="a" style="left:692px;top:481.5px;width:9px;height:9px;background:#484848;"></div>
<svg class="a" style="left:694.5px;top:484px" width="5" height="5" viewBox="0 0 5 5"><path d="M1 0 L4 2.5 L1 5 Z" fill="#9a9a9a"/></svg>
<div class="a" style="left:0px;top:495px;width:715px;height:17px;background:#2b2b2b;"></div>
<div class="a" style="left:0px;top:511px;width:37px;height:1px;background:#5a5a5a;"></div>
<div class="t" style="left:4.00px;top:500.00px;font-size:7.6px;color:#e0e0e0;">Ready</div>
<div class="t" style="left:353.10px;top:500.00px;font-size:7.6px;color:#e0e0e0;">Average: 1</div>
<div class="t" style="left:401.50px;top:500.00px;font-size:8.0px;color:#e0e0e0;">Count: 376</div>
<div class="t" style="left:451.90px;top:500.00px;font-size:7.5px;color:#e0e0e0;">Sum: 187</div>
<div class="a" style="left:499px;top:496px;width:26.5px;height:16px;background:#404040;"></div>
<svg class="a" style="left:506px;top:498px" width="12" height="11" viewBox="0 0 12 11"><rect x="0.5" y="0.5" width="11" height="10" fill="none" stroke="#e0e0e0"/><path d="M4.2 0.5 V10.5 M7.8 0.5 V10.5 M0.5 3.8 H11.5 M0.5 7.2 H11.5" stroke="#e0e0e0"/></svg>
<svg class="a" style="left:534.5px;top:498px" width="11" height="10" viewBox="0 0 11 10"><rect x="0.5" y="0.5" width="10" height="9" fill="none" stroke="#d0d0d0"/><rect x="2.5" y="2.5" width="6" height="5" fill="none" stroke="#d0d0d0"/></svg>
<svg class="a" style="left:562.5px;top:498px" width="11" height="10" viewBox="0 0 11 10"><path d="M0.5 0.5 H10.5 V9.5 H0.5 Z M6 0.5 V5 H0.5" fill="none" stroke="#d0d0d0"/></svg>
<div class="a" style="left:586.5px;top:503px;width:5px;height:1px;background:#cfcfcf;"></div>
<div class="a" style="left:596px;top:503px;width:69.5px;height:1px;background:#d8d8d8;"></div>
<div class="a" style="left:632.5px;top:499.3px;width:4.5px;height:9px;background:#f0f0f0;"></div>
<svg class="a" style="left:669px;top:500px" width="7" height="7" viewBox="0 0 7 7"><path d="M3.5 0 V7 M0 3.5 H7" stroke="#cfcfcf" stroke-width="1"/></svg>
<div class="t" style="left:684.70px;top:500.00px;font-size:7.5px;color:#e0e0e0;">130%</div>
<div class="a" style="left:22px;top:160.3px;width:683px;height:319.9px;background:transparent;border:4px solid #c8181e"></div>
</body></html>
